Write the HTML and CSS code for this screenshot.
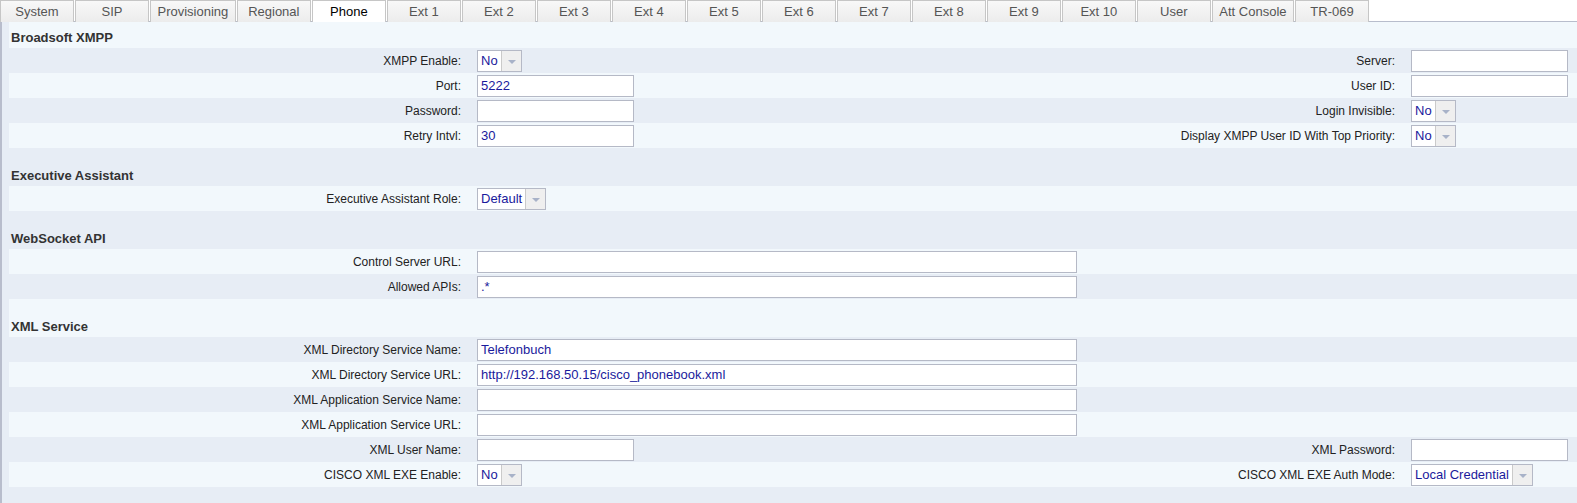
FILE: index.html
```html
<!DOCTYPE html>
<html lang="en">
<head>
  <meta charset="UTF-8" />
  <title>Phone</title>
  <link rel="stylesheet" href="styles.css">
</head>
<body>

  <div class="tabs">
    <div class="tab">System</div>
    <div class="tab">SIP</div>
    <div class="tab">Provisioning</div>
    <div class="tab">Regional</div>
    <div class="tab active">Phone</div>
    <div class="tab">Ext 1</div>
    <div class="tab">Ext 2</div>
    <div class="tab">Ext 3</div>
    <div class="tab">Ext 4</div>
    <div class="tab">Ext 5</div>
    <div class="tab">Ext 6</div>
    <div class="tab">Ext 7</div>
    <div class="tab">Ext 8</div>
    <div class="tab">Ext 9</div>
    <div class="tab">Ext 10</div>
    <div class="tab">User</div>
    <div class="tab">Att Console</div>
    <div class="tab">TR-069</div>
  </div>

  <div class="panel">

    <!-- Broadsoft XMPP -->
    <div class="head light first">Broadsoft XMPP</div>
    <div class="row">
      <div class="label">XMPP Enable:</div>
      <div class="field"><span class="select"><span class="val">No</span><span class="arrow"></span></span></div>
      <div class="label">Server:</div>
      <div class="field"><input type="text" value=""></div>
    </div>
    <div class="row light">
      <div class="label">Port:</div>
      <div class="field"><input type="text" value="5222"></div>
      <div class="label">User ID:</div>
      <div class="field"><input type="text" value=""></div>
    </div>
    <div class="row">
      <div class="label">Password:</div>
      <div class="field"><input type="password" value=""></div>
      <div class="label">Login Invisible:</div>
      <div class="field"><span class="select"><span class="val">No</span><span class="arrow"></span></span></div>
    </div>
    <div class="row light">
      <div class="label">Retry Intvl:</div>
      <div class="field"><input type="text" value="30"></div>
      <div class="label">Display XMPP User ID With Top Priority:</div>
      <div class="field"><span class="select"><span class="val">No</span><span class="arrow"></span></span></div>
    </div>

    <!-- Executive Assistant -->
    <div class="head">Executive Assistant</div>
    <div class="row light">
      <div class="label">Executive Assistant Role:</div>
      <div class="field"><span class="select"><span class="val">Default</span><span class="arrow"></span></span></div>
    </div>

    <!-- WebSocket API -->
    <div class="head">WebSocket API</div>
    <div class="row light">
      <div class="label">Control Server URL:</div>
      <div class="field wide"><input class="long" type="text" value=""></div>
    </div>
    <div class="row">
      <div class="label">Allowed APIs:</div>
      <div class="field wide"><input class="long" type="text" value=".*"></div>
    </div>

    <!-- XML Service -->
    <div class="head light">XML Service</div>
    <div class="row">
      <div class="label">XML Directory Service Name:</div>
      <div class="field wide"><input class="long" type="text" value="Telefonbuch"></div>
    </div>
    <div class="row light">
      <div class="label">XML Directory Service URL:</div>
      <div class="field wide"><input class="long" type="text" value="http://192.168.50.15/cisco_phonebook.xml"></div>
    </div>
    <div class="row">
      <div class="label">XML Application Service Name:</div>
      <div class="field wide"><input class="long" type="text" value=""></div>
    </div>
    <div class="row light">
      <div class="label">XML Application Service URL:</div>
      <div class="field wide"><input class="long" type="text" value=""></div>
    </div>
    <div class="row">
      <div class="label">XML User Name:</div>
      <div class="field"><input type="text" value=""></div>
      <div class="label">XML Password:</div>
      <div class="field"><input type="password" value=""></div>
    </div>
    <div class="row light">
      <div class="label">CISCO XML EXE Enable:</div>
      <div class="field"><span class="select"><span class="val">No</span><span class="arrow"></span></span></div>
      <div class="label">CISCO XML EXE Auth Mode:</div>
      <div class="field"><span class="select"><span class="val">Local Credential</span><span class="arrow"></span></span></div>
    </div>

  </div>

</body>
</html>
```

FILE: styles.css
```css
body {
  margin: 0;
  font-family: "Liberation Sans", Arial, sans-serif;
  background: #fff;
}

/* tab strip */
.tabs {
  display: flex;
  align-items: flex-start;
  gap: 1px;
  height: 21px;
}

.tab {
  box-sizing: border-box;
  min-width: 74px;
  height: 22px;
  padding: 0 6.5px;
  border: 1px solid #c6c6c6;
  border-bottom: 0;
  background: linear-gradient(#f8f8f8, #ececec);
  color: #555;
  font-size: 13px;
  line-height: 21px;
  text-align: center;
  white-space: nowrap;
}

.tab.active {
  position: relative;
  z-index: 1;
  background: #fff;
  color: #000;
}

/* settings panel */
.panel {
  border-top: 1px solid #b8bdcc;
  border-left: 2px solid #b8bdcc;
  background: #e7edf5;
  padding: 0 0 30px 7px;
}

.light {
  background: #f2f8fc;
}

.head {
  display: flex;
  align-items: flex-end;
  box-sizing: border-box;
  height: 38px;
  padding: 13px 0 3px 2px;
  font-size: 13px;
  line-height: 15px;
  font-weight: bold;
  color: #333;
}

.head.first {
  height: 26px;
  padding-top: 0;
}

.row {
  display: grid;
  grid-template-columns: 460px 1fr 1fr 174px;
  align-items: center;
  height: 25px;
}

.row.light {
  background: #f2f8fc;
}

.label {
  padding: 1px 8px 0 0;
  text-align: right;
  font-size: 12px;
  color: #222;
  white-space: nowrap;
}

.field {
  display: flex;
  padding-left: 8px;
}

.field.wide {
  grid-column: 2 / 5;
}

input {
  box-sizing: border-box;
  width: 157px;
  height: 22px;
  margin: 0;
  padding: 0 3px;
  border: 1px solid #b5b9c6;
  background: #fff;
  font-family: "Liberation Sans", Arial, sans-serif;
  font-size: 13px;
  color: #1a1a9c;
  outline: none;
}

input.long {
  width: 600px;
}

/* drop-down look-alike */
.select {
  display: flex;
  box-sizing: border-box;
  height: 22px;
  border: 1px solid #b5b9c6;
  background: #fff;
}

.select .val {
  padding: 0 3px;
  font-size: 13px;
  line-height: 20px;
  color: #1a1a9c;
}

.select .arrow {
  position: relative;
  width: 19px;
  border-left: 1px solid #cacaca;
  background: #efefef;
}

.select .arrow::after {
  content: "";
  position: absolute;
  left: 6px;
  top: 9px;
  border-left: 4px solid transparent;
  border-right: 4px solid transparent;
  border-top: 4px solid #a8b2c8;
}
```
